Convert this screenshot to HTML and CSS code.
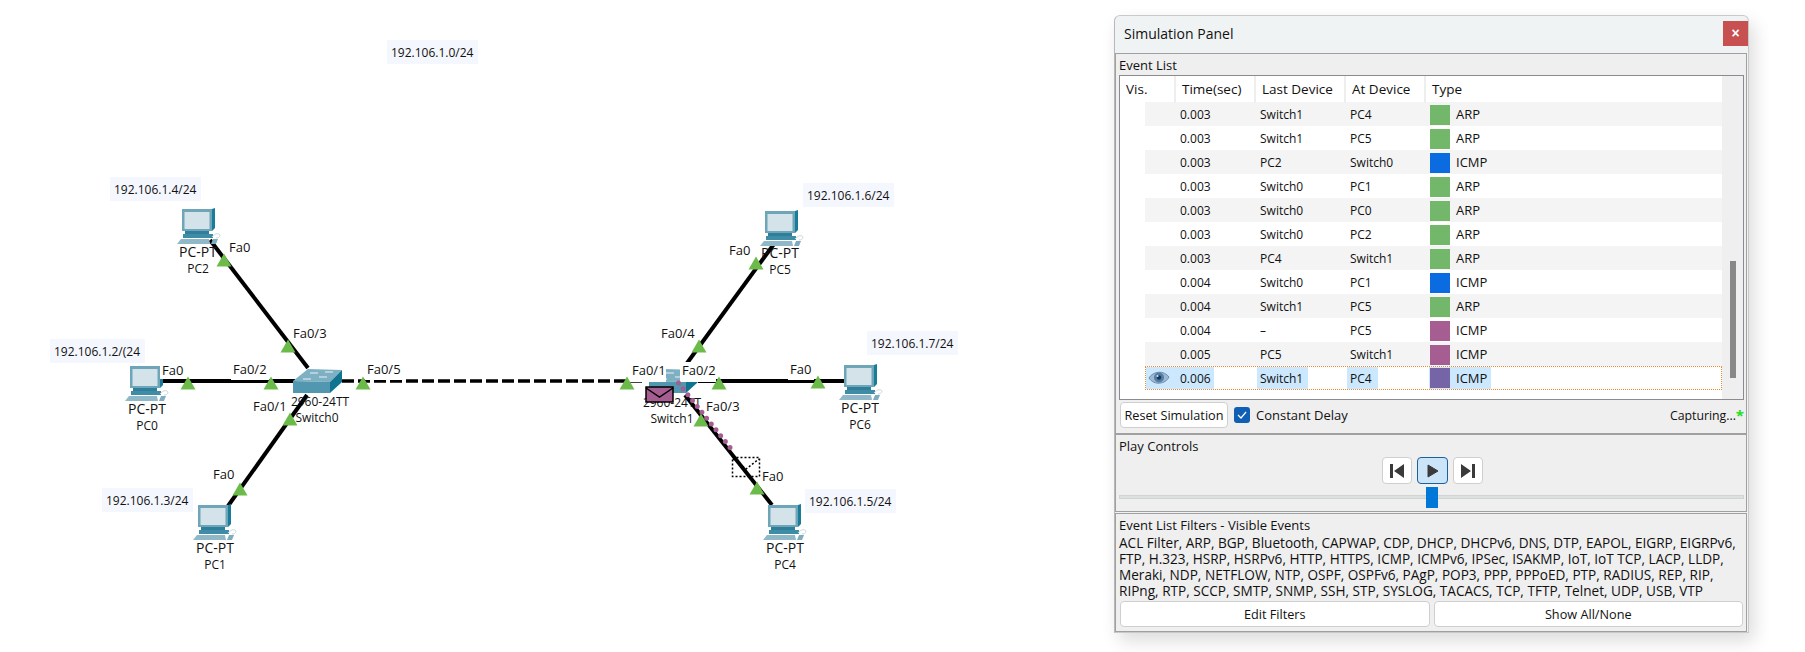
FILE: index.html
```html
<!DOCTYPE html>
<html lang="en">
<head>
  <meta charset="UTF-8" />
  <title>Simulation Panel</title>
  <link rel="stylesheet" href="styles.css">
</head>
<body>
  <div class="canvas">
    <svg class="topology" width="1114" height="652" viewBox="0 0 1114 652">
      <defs>
        <g id="pc">
          <path d="M5 1 L35 1 L38 0 L38 20 L35 23 L5 23 Z" fill="#1a7c98"/>
          <rect x="5" y="1" width="30" height="22" fill="#6fa5b9"/>
          <rect x="7.500" y="4" width="25" height="17" fill="#d4e3ea"/>
          <rect x="8" y="23" width="24" height="3" fill="#2f7f9a"/>
          <rect x="6" y="26" width="30" height="4" fill="#3f8ca6"/>
          <path d="M4 31 L32 31 L33 36 L0 36 Z" fill="#8fb8c8"/>
          <path d="M36 31 L41 31 L39 36 L34 36 Z" fill="#7fadbf"/>
          <path d="M35 29 C38 25 42 25 43 27 C43 29 41 30 39 30" fill="none" stroke="#c8d8de" stroke-width="1"/>
        </g>
        <g id="switch">
          <path d="M0 13 L15 1 L49 2 L37 14 Z" fill="#7eb0c4"/>
          <path d="M0 13 L37 14 L37 25 L0 25 Z" fill="#5297b0"/>
          <path d="M37 14 L49 2 L49 14 L37 25 Z" fill="#0f7490"/>
          <path d="M17 5 L25 5 M32 4 L40 4 M10 11 L18 11 M26 9 L34 9" stroke="#e8f2f6" stroke-width="1.200"/>
        </g>
        <path id="port" d="M-7.500 6.500 L0 -6.500 L7.500 6.500 Z" fill="#6cbb4a"/>
      </defs>

      <g class="links">
        <path d="M160 381 L295 381"/>
        <path d="M210 240 L308 368"/>
        <path d="M307 395 L228 506"/>
        <path class="crossover" d="M342 381 L645 381"/>
        <path d="M698 381 L845 381"/>
        <path d="M774 244 L682 370"/>
        <path d="M685 395 L772 505"/>
      </g>

      <use href="#pc" x="125" y="365"/>
      <use href="#pc" x="177" y="208"/>
      <use href="#pc" x="193" y="504"/>
      <use href="#pc" x="760" y="210"/>
      <use href="#pc" x="839" y="364"/>
      <use href="#pc" x="763" y="504"/>
      <use href="#switch" x="293" y="368"/>
      <use href="#switch" x="649" y="368"/>

      <g class="device">
        <text class="model" x="147" y="414">PC-PT</text><text x="147" y="430">PC0</text>
        <text class="model" x="198" y="257">PC-PT</text><text x="198" y="273">PC2</text>
        <text class="model" x="215" y="553">PC-PT</text><text x="215" y="569">PC1</text>
        <text class="model" x="780" y="258">PC-PT</text><text x="780" y="274">PC5</text>
        <text class="model" x="860" y="413">PC-PT</text><text x="860" y="429">PC6</text>
        <text class="model" x="785" y="553">PC-PT</text><text x="785" y="569">PC4</text>
        <text x="320" y="406">2960-24TT</text><text x="317" y="422">Switch0</text>
        <text x="672" y="407">2960-24TT</text><text x="672" y="423">Switch1</text>
      </g>

      <g class="ports">
        <rect x="160" y="362" width="26" height="17"/><text x="162" y="375">Fa0</text>
        <rect x="231" y="361" width="38" height="19"/><text x="233" y="374">Fa0/2</text>
        <rect x="365" y="361" width="38" height="19"/><text x="367" y="374">Fa0/5</text>
        <rect x="291" y="325" width="38" height="17"/><text x="293" y="338">Fa0/3</text>
        <rect x="251" y="398" width="40" height="17"/><text x="253" y="411">Fa0/1</text>
        <rect x="228" y="241" width="24" height="12"/><text x="229" y="252">Fa0</text>
        <rect x="211" y="466" width="26" height="17"/><text x="213" y="479">Fa0</text>
        <rect x="659" y="325" width="38" height="17"/><text x="661" y="338">Fa0/4</text>
        <rect x="728" y="244" width="24" height="12"/><text x="729" y="255">Fa0</text>
        <rect x="788" y="361" width="26" height="19"/><text x="790" y="374">Fa0</text>
        <rect x="630" y="362" width="36" height="20"/><text x="632" y="375">Fa0/1</text>
        <rect x="680" y="362" width="36" height="20"/><text x="682" y="375">Fa0/2</text>
        <rect x="704" y="398" width="38" height="17"/><text x="706" y="411">Fa0/3</text>
        <rect x="760" y="468" width="26" height="17"/><text x="762" y="481">Fa0</text>
      </g>

      <g class="subnets">
        <rect x="387" y="40" width="91" height="24"/><text x="391" y="57">192.106.1.0/24</text>
        <rect x="110" y="177" width="91" height="24"/><text x="114" y="194">192.106.1.4/24</text>
        <rect x="50" y="339" width="95" height="24"/><text x="54" y="356">192.106.1.2/(24</text>
        <rect x="102" y="488" width="91" height="24"/><text x="106" y="505">192.106.1.3/24</text>
        <rect x="803" y="183" width="91" height="24"/><text x="807" y="200">192.106.1.6/24</text>
        <rect x="867" y="331" width="91" height="24"/><text x="871" y="348">192.106.1.7/24</text>
        <rect x="805" y="489" width="91" height="24"/><text x="809" y="506">192.106.1.5/24</text>
      </g>

      <use href="#port" x="188" y="383"/>
      <use href="#port" x="271" y="383"/>
      <use href="#port" x="363" y="383"/>
      <use href="#port" x="288" y="346"/>
      <use href="#port" x="290" y="419"/>
      <use href="#port" x="224" y="260"/>
      <use href="#port" x="240" y="489"/>
      <use href="#port" x="627" y="383"/>
      <use href="#port" x="719" y="383"/>
      <use href="#port" x="699" y="346"/>
      <use href="#port" x="756" y="263"/>
      <use href="#port" x="818" y="382"/>
      <use href="#port" x="701" y="420"/>
      <use href="#port" x="757" y="488"/>

      <!-- packet on Switch1 -->
      <path class="trail" d="M678.500 383 L734.500 453"/>
      <g class="packet">
        <rect x="646" y="387" width="27" height="15"/>
        <path d="M646 388 L659.500 397 L673 388"/>
      </g>
      <g class="ghost">
        <rect x="732.500" y="457.500" width="27" height="19"/>
        <path d="M733 459 L746 469 L759 459"/>
      </g>
    </svg>
  </div>

  <div class="panel">
    <div class="title-bar">
      <span class="title">Simulation Panel</span>
      <button class="close">×</button>
    </div>

    <div class="group event-group">
      <div class="group-label">Event List</div>
      <div class="event-table">
        <div class="table-main">
          <div class="head">
            <span>Vis.</span><span>Time(sec)</span><span>Last Device</span><span>At Device</span><span>Type</span>
          </div>
          <div class="row"><i></i><span>0.003</span><span>Switch1</span><span>PC4</span><span class="type"><b class="arp"></b>ARP</span></div>
          <div class="row"><i></i><span>0.003</span><span>Switch1</span><span>PC5</span><span class="type"><b class="arp"></b>ARP</span></div>
          <div class="row"><i></i><span>0.003</span><span>PC2</span><span>Switch0</span><span class="type"><b class="icmp"></b>ICMP</span></div>
          <div class="row"><i></i><span>0.003</span><span>Switch0</span><span>PC1</span><span class="type"><b class="arp"></b>ARP</span></div>
          <div class="row"><i></i><span>0.003</span><span>Switch0</span><span>PC0</span><span class="type"><b class="arp"></b>ARP</span></div>
          <div class="row"><i></i><span>0.003</span><span>Switch0</span><span>PC2</span><span class="type"><b class="arp"></b>ARP</span></div>
          <div class="row"><i></i><span>0.003</span><span>PC4</span><span>Switch1</span><span class="type"><b class="arp"></b>ARP</span></div>
          <div class="row"><i></i><span>0.004</span><span>Switch0</span><span>PC1</span><span class="type"><b class="icmp"></b>ICMP</span></div>
          <div class="row"><i></i><span>0.004</span><span>Switch1</span><span>PC5</span><span class="type"><b class="arp"></b>ARP</span></div>
          <div class="row"><i></i><span>0.004</span><span>–</span><span>PC5</span><span class="type"><b class="pink"></b>ICMP</span></div>
          <div class="row"><i></i><span>0.005</span><span>PC5</span><span>Switch1</span><span class="type"><b class="pink"></b>ICMP</span></div>
          <div class="row selected">
            <i>
              <svg width="22" height="16" viewBox="0 0 22 16">
                <path d="M1 8 C5 1 16 0 21 7 C18 14 6 16 1 8 Z" fill="#9db8d2" stroke="#6f8cab" stroke-width="1"/>
                <circle cx="11" cy="7.500" r="5" fill="#4f7ea8"/>
                <circle cx="11" cy="7.500" r="2.200" fill="#1c3550"/>
                <circle cx="9.500" cy="6" r="1" fill="#dfeaf4"/>
              </svg>
            </i>
            <span><em class="time">0.006</em></span><span><em class="last">Switch1</em></span><span><em class="at">PC4</em></span><span class="type"><em class="kind"><b class="violet"></b>ICMP</em></span>
          </div>
        </div>
        <div class="scrollbar"><div class="thumb"></div></div>
      </div>
      <div class="event-footer">
        <button class="btn reset">Reset Simulation</button>
        <span class="check">
          <svg width="10" height="8" viewBox="0 0 10 8"><path d="M1 4 L4 7 L9 1" fill="none" stroke="#fff" stroke-width="1.200"/></svg>
        </span>
        <span class="check-label">Constant Delay</span>
        <span class="capturing">Capturing...<sup>*</sup></span>
      </div>
    </div>

    <div class="group play-group">
      <div class="group-label">Play Controls</div>
      <div class="play-buttons">
        <button class="btn play-btn">
          <svg width="16" height="16" viewBox="0 0 16 16"><path d="M1 1 H4 V15 H1 Z M15 1 V15 L5 8 Z" fill="#3a3a3a"/></svg>
        </button>
        <button class="btn play-btn active">
          <svg width="12" height="14" viewBox="0 0 12 14"><path d="M1 1 L11 7 L1 13 Z" fill="#3a3a3a" stroke="#3a3a3a"/></svg>
        </button>
        <button class="btn play-btn">
          <svg width="16" height="16" viewBox="0 0 16 16"><path d="M12 1 H15 V15 H12 Z M1 1 V15 L11 8 Z" fill="#3a3a3a"/></svg>
        </button>
      </div>
      <div class="slider"><div class="handle"></div></div>
    </div>

    <div class="group filter-group">
      <div class="group-label">Event List Filters - Visible Events</div>
      <div class="filters">
        <div>ACL Filter, ARP, BGP, Bluetooth, CAPWAP, CDP, DHCP, DHCPv6, DNS, DTP, EAPOL, EIGRP, EIGRPv6,</div>
        <div>FTP, H.323, HSRP, HSRPv6, HTTP, HTTPS, ICMP, ICMPv6, IPSec, ISAKMP, IoT, IoT TCP, LACP, LLDP,</div>
        <div>Meraki, NDP, NETFLOW, NTP, OSPF, OSPFv6, PAgP, POP3, PPP, PPPoED, PTP, RADIUS, REP, RIP,</div>
        <div>RIPng, RTP, SCCP, SMTP, SNMP, SSH, STP, SYSLOG, TACACS, TCP, TFTP, Telnet, UDP, USB, VTP</div>
      </div>
      <div class="filter-buttons">
        <button class="btn">Edit Filters</button>
        <button class="btn">Show All/None</button>
      </div>
    </div>
  </div>
</body>
</html>
```

FILE: styles.css
```css
* {
  box-sizing: border-box;
}

html, body {
  margin: 0;
  height: 652px;
  overflow: hidden;
}

body {
  display: flex;
  align-items: flex-start;
  background: white;
  color: #111;
  font-family: "Open Sans", "Noto Sans", sans-serif;
  font-size: 12px;
}

.canvas {
  flex: none;
  width: 1114px;
  height: 652px;
}

.topology {
  display: block;
}

.topology text {
  font-family: "Open Sans", "Noto Sans", sans-serif;
  font-size: 12px;
  fill: #111;
}

.topology .model {
  font-size: 14px;
}

.topology .ports text {
  font-size: 13px;
}

.links path {
  fill: none;
  stroke: #000;
  stroke-width: 4;
}

.links .crossover {
  stroke-dasharray: 12 4;
  stroke-width: 3.5;
}

.device text {
  text-anchor: middle;
}

.ports rect {
  fill: white;
}

.subnets rect {
  fill: #f5f7fe;
}

.trail {
  fill: none;
  stroke: #a65e92;
  stroke-width: 5;
  stroke-linecap: round;
  stroke-dasharray: 0 7.500;
}

.packet rect {
  fill: #a65e92;
  stroke: #000;
  stroke-width: 1.500;
}

.packet path {
  fill: none;
  stroke: #000;
  stroke-width: 1.500;
}

.ghost rect, .ghost path {
  fill: none;
  stroke: #000;
  stroke-width: 1.500;
  stroke-dasharray: 2 2;
}

.panel {
  flex: none;
  width: 635px;
  height: 618px;
  margin-top: 15px;
  padding-right: 1px;
  background: #f0f3f4;
  border: 1px solid #c9c9c9;
  border-left-color: #b8b8b8;
  border-radius: 6px 6px 0 0;
  box-shadow: 5px 8px 18px rgba(0, 0, 0, 0.14);
}

.title-bar {
  display: flex;
  align-items: center;
  justify-content: space-between;
  height: 37px;
  padding: 0 0 3px 9px;
}

.title {
  font-size: 14px;
}

.close {
  width: 25px;
  height: 25px;
  margin-right: -1px;
  padding: 0;
  border: none;
  background: #c75050;
  color: white;
  font-size: 14px;
  font-weight: bold;
  line-height: 25px;
}

.group {
  background: #efefef;
  border: 1px solid #a0a0a0;
  padding: 0 2px 0 3px;
}

.event-group {
  height: 381px;
}

.play-group {
  height: 78px;
}

.filter-group {
  height: 119px;
  margin-top: 1px;
}

.group-label {
  height: 21px;
  font-size: 13px;
  line-height: 23px;
}

.event-table {
  display: flex;
  height: 325px;
  background: white;
  border: 1px solid #8a8a90;
}

.table-main {
  flex: 1;
}

.head {
  display: grid;
  grid-template-columns: 56px 80px 90px 80px 1fr;
  height: 26px;
  font-size: 13.500px;
}

.head span {
  padding-left: 6px;
  line-height: 27px;
  border-right: 2px solid #eee;
}

.head span:last-child {
  border-right: none;
}

.row {
  display: grid;
  grid-template-columns: 31px 80px 90px 80px 1fr;
  height: 24px;
  margin-left: 25px;
  line-height: 25px;
}

.row:nth-child(even) {
  background: #f4f4f4;
}

.row i {
  font-style: normal;
}

.row span {
  padding-left: 4px;
}

.row b {
  display: block;
  width: 20px;
  height: 20px;
}

.row .type {
  display: flex;
  align-items: center;
  gap: 6px;
  font-size: 13px;
}

.arp { background: #73b86a; }
.icmp { background: #0b6be0; }
.pink { background: #a65e92; }
.violet { background: #7565a6; }

.selected {
  border: 1px dotted #f08a30;
  line-height: 23px;
}

.selected em {
  font-style: normal;
  display: block;
  background: #cce8ff;
  height: 22px;
}

.selected i {
  display: block;
  background: #cce8ff;
  height: 22px;
  padding-left: 2px;
  padding-top: 3px;
}

.selected i svg {
  display: block;
}

.selected span {
  padding-left: 0;
}

.selected .time {
  width: 37px;
  padding-left: 3px;
}

.selected .last {
  width: 51px;
  padding-left: 3px;
}

.selected .at {
  width: 31px;
  padding-left: 3px;
}

.selected .type {
  padding-left: 2px;
}

.selected .kind {
  display: flex;
  align-items: center;
  gap: 6px;
  width: 62px;
  padding-left: 1px;
}

.scrollbar {
  flex: none;
  width: 21px;
  padding-left: 8px;
  background: #efefef;
}

.thumb {
  width: 6px;
  height: 117px;
  margin-top: 185px;
  background: #888;
}

.event-footer {
  display: flex;
  align-items: center;
  height: 33px;
  padding: 0 0 3px 1px;
}

.btn {
  height: 26px;
  padding: 0;
  background: white;
  border: 1px solid #cfcfcf;
  border-radius: 4px;
  color: #111;
  font-family: inherit;
  font-size: 12.700px;
}

.reset {
  width: 108px;
}

.check {
  display: flex;
  align-items: center;
  justify-content: center;
  width: 16px;
  height: 16px;
  margin-left: 6px;
  background: #0f5fb5;
  border-radius: 3px;
}

.check-label {
  margin-left: 6px;
  font-size: 13px;
}

.capturing {
  margin-left: auto;
  padding-right: 8px;
  position: relative;
  font-size: 12.300px;
}

.capturing sup {
  position: absolute;
  right: 0;
  top: 1px;
  color: #22dd22;
  font-size: 15px;
  font-weight: bold;
  line-height: 15px;
}

.play-buttons {
  display: flex;
  justify-content: center;
  gap: 5px;
  height: 27px;
  margin-top: 1px;
  padding-left: 2px;
}

.play-btn {
  display: flex;
  align-items: center;
  justify-content: center;
  width: 30px;
  height: 27px;
}

.play-btn.active {
  width: 31px;
  background: #cce4f7;
  border-color: #1a5f9e;
}

.slider {
  height: 4px;
  margin-top: 11px;
  background: #dce0de;
  border: 1px solid #d0d4d2;
  position: relative;
}

.handle {
  position: absolute;
  left: 306px;
  top: -9px;
  width: 12px;
  height: 21px;
  background: #0078d7;
}

.filters {
  font-size: 13.600px;
  line-height: 16px;
  white-space: nowrap;
}

.filter-buttons {
  display: flex;
  gap: 4px;
  margin-top: 2px;
  padding-left: 1px;
  padding-right: 1px;
}

.filter-buttons .btn {
  flex: 1;
}
```
